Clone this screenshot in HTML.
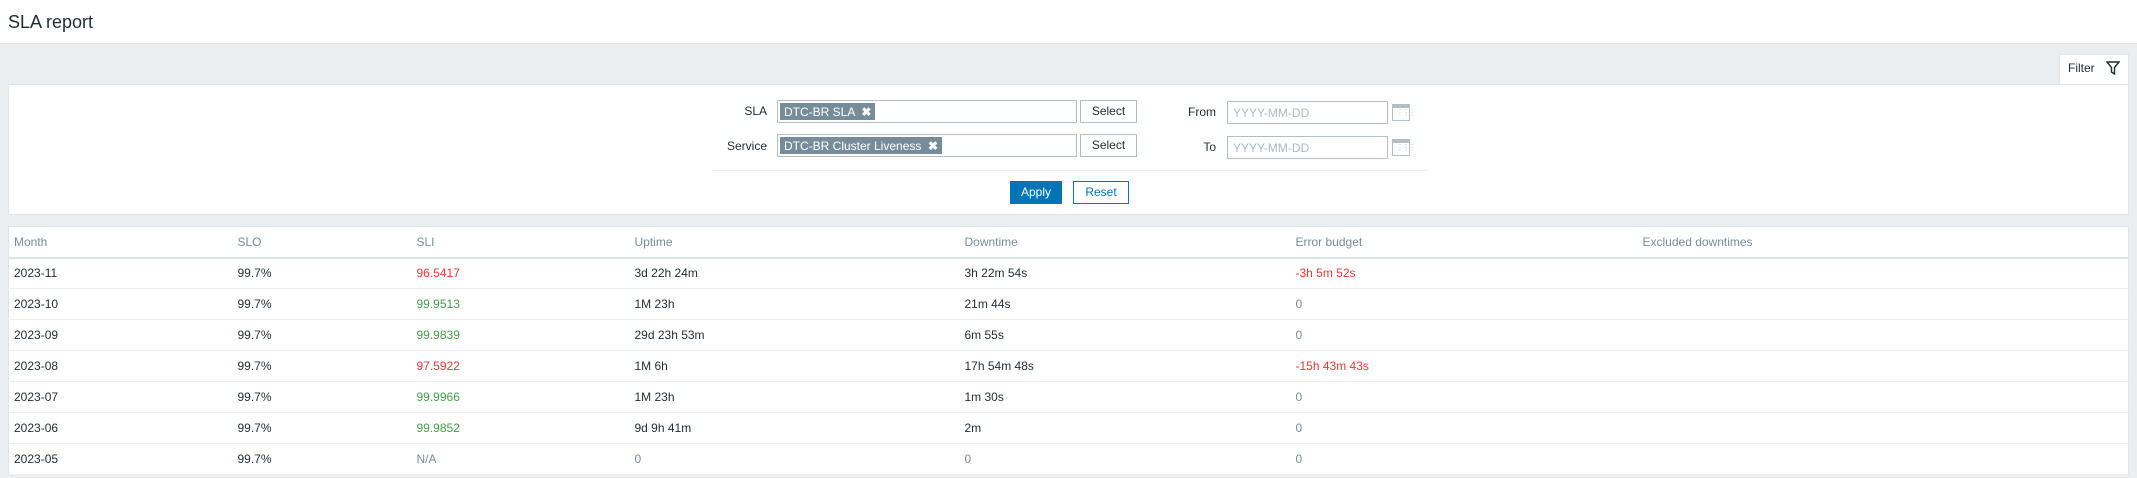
<!DOCTYPE html>
<html><head><meta charset="utf-8"><style>
*{box-sizing:border-box;margin:0;padding:0}
body{width:2137px;height:478px;background:#ebeef0;font-family:"Liberation Sans",Arial,sans-serif;font-size:12px;color:#1f2c33;position:relative;overflow:hidden}
.hdr{position:absolute;left:0;top:0;width:2137px;height:44px;background:#fff;border-bottom:1px solid #dfe4e7}
.hdr h1{position:absolute;left:8px;top:12px;font-size:18px;font-weight:normal;color:#1f2c33}
.tab{position:absolute;left:2059px;top:54px;width:70px;height:31px;background:#fff;border:1px solid #dfe4e7;border-bottom:none;font-size:12px;padding:6px 0 0 8px}
.tab svg{position:absolute;right:8px;top:6px}
.panel{position:absolute;left:8px;top:84px;width:2121px;height:131px;background:#fff;border:1px solid #dfe4e7}
.abs{position:absolute}
.lbl{position:absolute;text-align:right;font-size:12px;color:#1f2c33}
.inp{position:absolute;border:1px solid #b4bfc5;background:#fff}
.chip{position:absolute;left:2px;top:2px;height:17px;background:#768d99;color:#fff;font-size:12px;padding:2px 4px;white-space:nowrap}
.btn{position:absolute;border:1px solid #b4bfc5;background:#fff;text-align:center;line-height:21px;font-size:12px}
.ph{color:#acbbc2;font-size:12px;padding:4px 0 0 5px}
.cal{position:absolute;width:18px;height:17px;border:1px solid #b4bfc5;background:#fff}
.cal:before{content:"";position:absolute;left:0;right:0;top:0;height:3px;background:#b4bfc5}
.cal:after{content:"⋮⋮⋮";position:absolute;left:3px;top:3px;font-size:8px;color:#b4bfc5;letter-spacing:-2px}
table{position:absolute;left:8px;top:226px;width:2121px;height:248px;background:#fff;border-collapse:collapse;border:1px solid #dfe4e7;table-layout:fixed}
th{font-weight:normal;color:#768d99;text-align:left;height:31px;border-bottom:2px solid #dfe4e7;padding-left:5px}
td{height:31px;border-bottom:1px solid #ebeef0;padding-left:5px}
.r{color:#e53935}.g{color:#429e47}.z{color:#768d99}
</style></head><body>
<div class="hdr"><h1>SLA report</h1></div>
<div class="tab">Filter<svg width="14" height="14" viewBox="0 0 14 14"><path d="M1 1h12L8.5 6.5V13L5.5 11V6.5Z" fill="none" stroke="#1f2c33" stroke-width="1.4"/></svg></div>
<div class="panel"></div>
<div class="lbl" style="left:700px;top:104px;width:67px">SLA</div>
<div class="inp" style="left:777px;top:100px;width:300px;height:23px"><div class="chip">DTC-BR SLA &nbsp;<b>✖</b></div></div>
<div class="btn" style="left:1080px;top:100px;width:57px;height:23px">Select</div>
<div class="lbl" style="left:700px;top:139px;width:67px">Service</div>
<div class="inp" style="left:777px;top:134px;width:300px;height:23px"><div class="chip">DTC-BR Cluster Liveness &nbsp;<b>✖</b></div></div>
<div class="btn" style="left:1080px;top:134px;width:57px;height:23px">Select</div>
<div class="lbl" style="left:1160px;top:105px;width:56px">From</div>
<div class="inp ph" style="left:1227px;top:101px;width:161px;height:23px">YYYY-MM-DD</div>
<div class="cal" style="left:1392px;top:104px"></div>
<div class="lbl" style="left:1160px;top:140px;width:56px">To</div>
<div class="inp ph" style="left:1227px;top:136px;width:161px;height:23px">YYYY-MM-DD</div>
<div class="cal" style="left:1392px;top:139px"></div>
<div class="abs" style="left:712px;top:170px;width:716px;height:1px;background:#ebeef0"></div>
<div class="btn" style="left:1010px;top:181px;width:52px;height:23px;background:#0275b8;border-color:#0275b8;color:#fff">Apply</div>
<div class="btn" style="left:1073px;top:181px;width:56px;height:23px;border-color:#0275b8;color:#0275b8">Reset</div>
<table>
<colgroup><col style="width:224px"><col style="width:179px"><col style="width:218px"><col style="width:330px"><col style="width:331px"><col style="width:347px"><col></colgroup>
<tr><th>Month</th><th>SLO</th><th>SLI</th><th>Uptime</th><th>Downtime</th><th>Error budget</th><th>Excluded downtimes</th></tr>
<tr><td>2023-11</td><td>99.7%</td><td class="r">96.5417</td><td>3d 22h 24m</td><td>3h 22m 54s</td><td class="r">-3h 5m 52s</td><td></td></tr>
<tr><td>2023-10</td><td>99.7%</td><td class="g">99.9513</td><td>1M 23h</td><td>21m 44s</td><td class="z">0</td><td></td></tr>
<tr><td>2023-09</td><td>99.7%</td><td class="g">99.9839</td><td>29d 23h 53m</td><td>6m 55s</td><td class="z">0</td><td></td></tr>
<tr><td>2023-08</td><td>99.7%</td><td class="r">97.5922</td><td>1M 6h</td><td>17h 54m 48s</td><td class="r">-15h 43m 43s</td><td></td></tr>
<tr><td>2023-07</td><td>99.7%</td><td class="g">99.9966</td><td>1M 23h</td><td>1m 30s</td><td class="z">0</td><td></td></tr>
<tr><td>2023-06</td><td>99.7%</td><td class="g">99.9852</td><td>9d 9h 41m</td><td>2m</td><td class="z">0</td><td></td></tr>
<tr><td>2023-05</td><td>99.7%</td><td class="z">N/A</td><td class="z">0</td><td class="z">0</td><td class="z">0</td><td></td></tr>
</table>
</body></html>
